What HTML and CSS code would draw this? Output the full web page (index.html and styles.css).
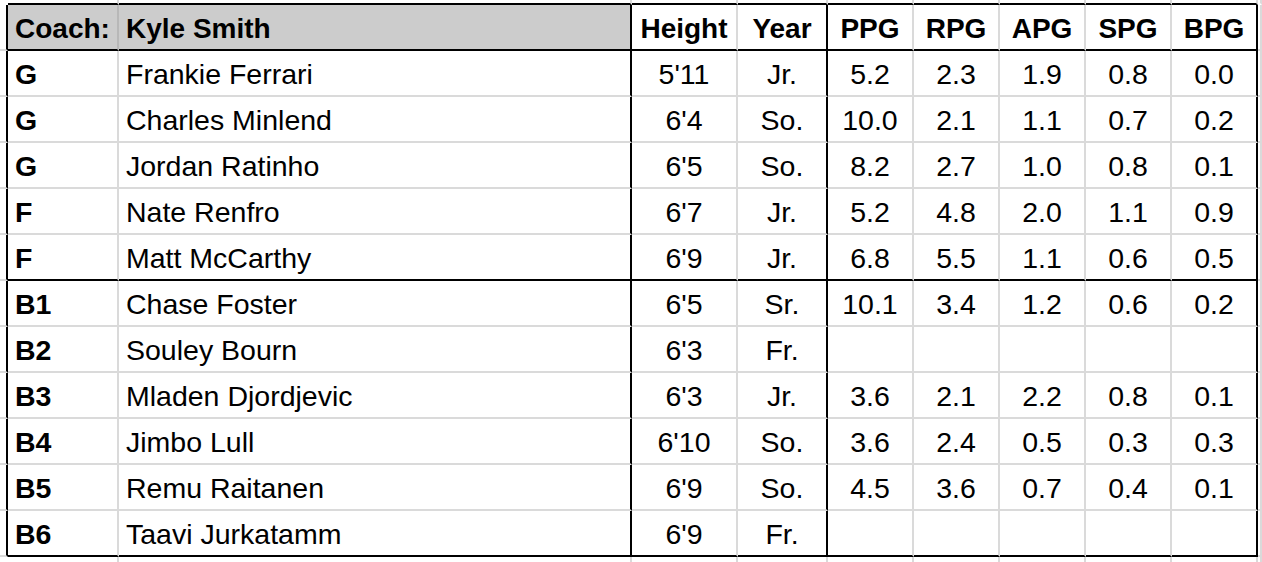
FILE: index.html
```html
<!DOCTYPE html>
<html>
<head>
<meta charset="utf-8">
<link rel="stylesheet" href="styles.css">
</head>
<body>
<div class="sheet">
  <div class="row edge-top">
    <div class="gut"></div><div></div><div class="bk"></div><div></div><div class="bk"></div><div></div><div></div><div></div><div></div><div class="bk"></div><div class="out"></div>
  </div>
  <div class="row head">
    <div class="gut"></div><div class="pos shade">Coach:</div><div class="name shade">Kyle Smith</div><div class="ht">Height</div><div class="yr">Year</div><div class="num">PPG</div><div class="num">RPG</div><div class="num">APG</div><div class="num">SPG</div><div class="num last">BPG</div><div class="out"></div>
  </div>
  <div class="row">
    <div class="gut"></div><div class="pos">G</div><div class="name">Frankie Ferrari</div><div class="ht">5'11</div><div class="yr">Jr.</div><div class="num">5.2</div><div class="num">2.3</div><div class="num">1.9</div><div class="num">0.8</div><div class="num last">0.0</div><div class="out"></div>
  </div>
  <div class="row">
    <div class="gut"></div><div class="pos">G</div><div class="name">Charles Minlend</div><div class="ht">6'4</div><div class="yr">So.</div><div class="num">10.0</div><div class="num">2.1</div><div class="num">1.1</div><div class="num">0.7</div><div class="num last">0.2</div><div class="out"></div>
  </div>
  <div class="row">
    <div class="gut"></div><div class="pos">G</div><div class="name">Jordan Ratinho</div><div class="ht">6'5</div><div class="yr">So.</div><div class="num">8.2</div><div class="num">2.7</div><div class="num">1.0</div><div class="num">0.8</div><div class="num last">0.1</div><div class="out"></div>
  </div>
  <div class="row">
    <div class="gut"></div><div class="pos">F</div><div class="name">Nate Renfro</div><div class="ht">6'7</div><div class="yr">Jr.</div><div class="num">5.2</div><div class="num">4.8</div><div class="num">2.0</div><div class="num">1.1</div><div class="num last">0.9</div><div class="out"></div>
  </div>
  <div class="row split">
    <div class="gut"></div><div class="pos">F</div><div class="name">Matt McCarthy</div><div class="ht">6'9</div><div class="yr">Jr.</div><div class="num">6.8</div><div class="num">5.5</div><div class="num">1.1</div><div class="num">0.6</div><div class="num last">0.5</div><div class="out"></div>
  </div>
  <div class="row">
    <div class="gut"></div><div class="pos">B1</div><div class="name">Chase Foster</div><div class="ht">6'5</div><div class="yr">Sr.</div><div class="num">10.1</div><div class="num">3.4</div><div class="num">1.2</div><div class="num">0.6</div><div class="num last">0.2</div><div class="out"></div>
  </div>
  <div class="row">
    <div class="gut"></div><div class="pos">B2</div><div class="name">Souley Bourn</div><div class="ht">6'3</div><div class="yr">Fr.</div><div class="num"></div><div class="num"></div><div class="num"></div><div class="num"></div><div class="num last"></div><div class="out"></div>
  </div>
  <div class="row">
    <div class="gut"></div><div class="pos">B3</div><div class="name">Mladen Djordjevic</div><div class="ht">6'3</div><div class="yr">Jr.</div><div class="num">3.6</div><div class="num">2.1</div><div class="num">2.2</div><div class="num">0.8</div><div class="num last">0.1</div><div class="out"></div>
  </div>
  <div class="row">
    <div class="gut"></div><div class="pos">B4</div><div class="name">Jimbo Lull</div><div class="ht">6'10</div><div class="yr">So.</div><div class="num">3.6</div><div class="num">2.4</div><div class="num">0.5</div><div class="num">0.3</div><div class="num last">0.3</div><div class="out"></div>
  </div>
  <div class="row">
    <div class="gut"></div><div class="pos">B5</div><div class="name">Remu Raitanen</div><div class="ht">6'9</div><div class="yr">So.</div><div class="num">4.5</div><div class="num">3.6</div><div class="num">0.7</div><div class="num">0.4</div><div class="num last">0.1</div><div class="out"></div>
  </div>
  <div class="row split">
    <div class="gut"></div><div class="pos">B6</div><div class="name">Taavi Jurkatamm</div><div class="ht">6'9</div><div class="yr">Fr.</div><div class="num"></div><div class="num"></div><div class="num"></div><div class="num"></div><div class="num last"></div><div class="out"></div>
  </div>
  <div class="row edge-bottom">
    <div class="gut"></div><div></div><div class="bk"></div><div></div><div class="bk"></div><div></div><div></div><div></div><div></div><div class="bk"></div><div class="out"></div>
  </div>
</div>
</body>
</html>
```
FILE: styles.css
```css
html, body {
  margin: 0;
  background: #ffffff;
}

body {
  font-family: "Liberation Sans", Arial, Helvetica, sans-serif;
  font-size: 28.5px;
  color: #000000;
}

.sheet {
  display: flex;
  flex-direction: column;
  width: 1262px;
  height: 562px;
  overflow: hidden;
}

.row {
  display: grid;
  grid-template-columns: 8px 111px 513px 106px 90px repeat(5, 86px) 1fr;
  height: 46px;
  flex: none;
}

.row > div {
  box-sizing: border-box;
  border-right: 2px solid #dadada;
  border-bottom: 2px solid #dadada;
  line-height: 41px;
  padding: 3px 7px 0;
  white-space: nowrap;
  overflow: hidden;
}

.row.edge-top {
  height: 5px;
}

.row.edge-top > div {
  border-bottom-color: #000000;
  padding: 0;
}

.row.edge-top > .gut,
.row.edge-top > .out {
  border-bottom-color: transparent;
}

.row.edge-bottom {
  height: 6px;
}

.row.edge-bottom > div {
  border-bottom: 0;
  padding: 0;
}

.row > .gut {
  border-right-color: #000000;
  padding: 0;
}

.row.edge-top > .gut,
.row.edge-bottom > .gut {
  border-right-color: transparent;
}

.row > .bk {
  border-right-color: #dadada;
}

.row > .name,
.row > .yr,
.row > .last {
  border-right-color: #000000;
}

.row.edge-top > .bk,
.row.edge-bottom > .bk {
  border-right-color: #dadada;
}

.row > .out {
  padding: 0;
}

.head > div,
.split > div {
  border-bottom-color: #000000;
}

.head > .gut,
.head > .out,
.split > .gut,
.split > .out {
  border-bottom-color: #dadada;
}

.head {
  font-weight: bold;
  font-size: 28px;
}

.shade {
  background: #cccccc;
}

.head > .pos {
  border-right-color: #b8b8b8;
}

.pos {
  font-weight: bold;
}

.ht,
.yr,
.num {
  text-align: center;
  padding-left: 0;
  padding-right: 0;
}
```
